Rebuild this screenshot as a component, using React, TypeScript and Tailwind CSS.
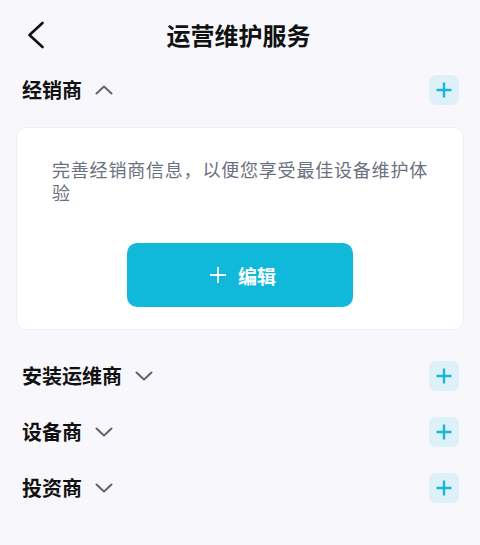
import { ReactNode } from 'react'

const font = { fontFamily: '"Noto Sans CJK SC", "Noto Sans", sans-serif' }

function Chevron({ up = false }: { up?: boolean }) {
  return (
    <svg width="18" height="10" viewBox="0 0 18 10" fill="none" className="shrink-0">
      <path
        d={up ? 'M1.5 8.5 L9 1.5 L16.5 8.5' : 'M1.5 1.5 L9 8.5 L16.5 1.5'}
        stroke="#5f6470"
        strokeWidth="2"
        strokeLinecap="round"
        strokeLinejoin="round"
      />
    </svg>
  )
}

function AddButton() {
  return (
    <button className="w-[30px] h-[30px] rounded-[7px] bg-[#dff1f8] flex items-center justify-center">
      <svg width="16" height="16" viewBox="0 0 16 16" fill="none">
        <path d="M8 0.5 V15.5 M0.5 8 H15.5" stroke="#17b6da" strokeWidth="2.4" />
      </svg>
    </button>
  )
}

function SectionRow({ title, open = false, className = '' }: { title: string; open?: boolean; className?: string }) {
  return (
    <div className={`flex items-center justify-between pl-[22px] pr-[21px] ${className}`}>
      <div className="flex items-center gap-[13px]">
        <span className="text-[20px] font-bold text-[#111] leading-none">{title}</span>
        <Chevron up={open} />
      </div>
      <AddButton />
    </div>
  )
}

function Card({ children }: { children: ReactNode }) {
  return (
    <div className="mx-[16px] mt-[17px] mb-[18px] bg-white rounded-[10px] border border-[#eeeef4] px-[35px] pt-[30px] pb-[22px]">
      {children}
    </div>
  )
}

export default function App() {
  return (
    <div className="w-[480px] h-[545px] bg-[#f7f7fc] overflow-hidden" style={font}>
      <div className="relative h-[70px] flex items-center justify-center">
        <button className="absolute left-[26px] top-[20px] w-[20px] h-[30px] flex items-center">
          <svg width="20" height="30" viewBox="0 0 20 30" fill="none">
            <path d="M16.5 3 L3.5 15 L16.5 27" stroke="#111" strokeWidth="2.6" strokeLinecap="round" strokeLinejoin="round" />
          </svg>
        </button>
        <h1 className="text-[24px] font-bold text-[#111] leading-none -ml-[3px]">运营维护服务</h1>
      </div>

      <SectionRow title="经销商" open className="h-[40px]" />

      <Card>
        <p className="text-[18px] leading-[23px] tracking-[0.8px] text-[#6b7180]">
          完善经销商信息，以便您享受最佳设备维护体验
        </p>
        <div className="flex justify-center mt-[39px]">
          <button className="w-[226px] h-[64px] rounded-[10px] bg-[#10b9d9] flex items-center justify-center gap-[12px] pl-[6px] text-white">
            <svg width="16" height="16" viewBox="0 0 16 16" fill="none">
              <path d="M8 0 V16 M0 8 H16" stroke="#fff" strokeWidth="1.8" />
            </svg>
            <span className="text-[19px] font-semibold leading-none">编辑</span>
          </button>
        </div>
      </Card>

      <SectionRow title="安装运维商" className="h-[56px]" />
      <SectionRow title="设备商" className="h-[56px]" />
      <SectionRow title="投资商" className="h-[56px]" />
    </div>
  )
}
